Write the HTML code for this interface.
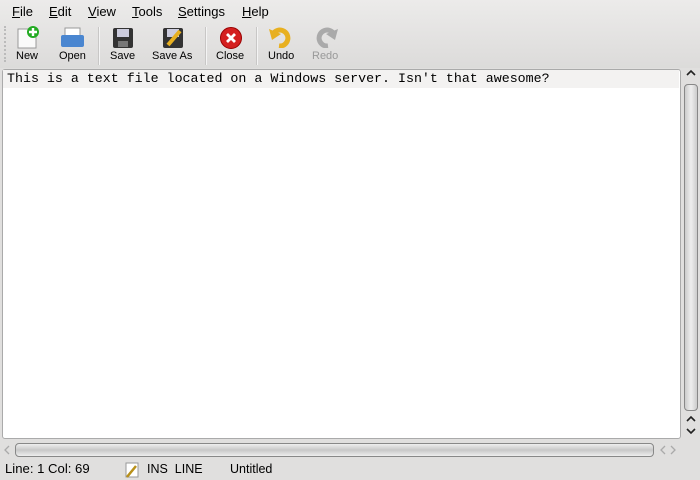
<!DOCTYPE html><html><head><style>
body{margin:0;width:700px;height:480px;background:#e0dfde;font-family:"Liberation Sans",sans-serif;font-size:12px;color:#000;position:relative;overflow:hidden}
.a{position:absolute}
.menu span{position:absolute;top:4px;font-size:13px}
.tb{position:absolute;top:50px;font-size:11px;text-align:center}
.sep{position:absolute;top:27px;width:1px;height:38px;background:#c8c7c6;border-right:1px solid #f4f4f4}
</style></head><body>
<div class="a" style="left:0;top:0;width:700px;height:68px;background:linear-gradient(#ecebea,#dcdbda)"></div>
<div class="menu"><span style="left:12px"><u>F</u>ile</span><span style="left:49px"><u>E</u>dit</span><span style="left:88px"><u>V</u>iew</span><span style="left:132px"><u>T</u>ools</span><span style="left:178px"><u>S</u>ettings</span><span style="left:242px"><u>H</u>elp</span></div>
<div class="a" style="left:4px;top:26px;width:2px;height:36px;border-left:2px dotted #bbb"></div>
<svg class="a" style="left:14px;top:25px" width="28" height="26"><path d="M4 4h12l6 6v13H4z" fill="#fafafa" stroke="#999"/><circle cx="19" cy="7" r="6" fill="#2a2"/><path d="M19 3v8M15 7h8" stroke="#fff" stroke-width="2.4"/></svg>
<svg class="a" style="left:60px;top:27px" width="26" height="22"><rect x="5" y="1" width="15" height="8" fill="#fff" stroke="#999"/><rect x="1" y="8" width="23" height="12" rx="2" fill="#4a86d0"/></svg>
<svg class="a" style="left:112px;top:27px" width="22" height="22"><rect x="1" y="1" width="20" height="20" rx="2" fill="#333"/><rect x="5" y="2" width="12" height="8" fill="#ccd"/><rect x="6" y="14" width="10" height="6" fill="#777"/></svg>
<svg class="a" style="left:162px;top:27px" width="22" height="22"><rect x="1" y="1" width="20" height="20" rx="2" fill="#333"/><rect x="5" y="2" width="12" height="8" fill="#ccd"/><path d="M6 18L18 4" stroke="#e8b020" stroke-width="4"/></svg>
<svg class="a" style="left:219px;top:26px" width="24" height="24"><circle cx="12" cy="12" r="10.5" fill="#d42020" stroke="#900"/><path d="M8 8l8 8M16 8l-8 8" stroke="#fff" stroke-width="2.8"/></svg>
<svg class="a" style="left:268px;top:26px" width="26" height="22"><path d="M5 8a8 8 0 1 1 6 12" fill="none" stroke="#e8b020" stroke-width="5"/><path d="M1 3l3 11 9-6z" fill="#e8b020"/></svg>
<svg class="a" style="left:313px;top:26px" width="26" height="22"><path d="M21 8a8 8 0 1 0-6 12" fill="none" stroke="#aaa" stroke-width="5"/><path d="M25 3l-3 11-9-6z" fill="#aaa"/></svg>
<div class="sep" style="left:98px"></div><div class="sep" style="left:205px"></div><div class="sep" style="left:256px"></div>
<div class="tb" style="left:16px">New</div><div class="tb" style="left:59px">Open</div><div class="tb" style="left:110px">Save</div><div class="tb" style="left:152px">Save As</div><div class="tb" style="left:216px">Close</div><div class="tb" style="left:268px">Undo</div><div class="tb" style="left:312px;color:#999">Redo</div>
<div class="a" style="left:2px;top:69px;width:677px;height:368px;background:#fff;border:1px solid #aaa;border-radius:3px"></div>
<div class="a" style="left:3px;top:70px;width:676px;height:18px;background:#f3f2f1"></div>
<div class="a" style="left:7px;top:71px;font-family:'Liberation Mono',monospace;font-size:13.3px;white-space:pre">This is a text file located on a Windows server. Isn't that awesome?</div>
<div class="a" style="left:684px;top:84px;width:12px;height:325px;border:1px solid #888;border-radius:4px;background:linear-gradient(90deg,#ccc,#eee,#ccc)"></div>
<svg class="a" style="left:684px;top:68px" width="14" height="10"><path d="M3 7l4-4 4 4" fill="none" stroke="#222" stroke-width="1.6"/></svg>
<svg class="a" style="left:684px;top:414px" width="14" height="10"><path d="M3 7l4-4 4 4" fill="none" stroke="#222" stroke-width="1.6"/></svg>
<svg class="a" style="left:684px;top:426px" width="14" height="10"><path d="M3 3l4 4 4-4" fill="none" stroke="#222" stroke-width="1.6"/></svg>
<svg class="a" style="left:2px;top:443px" width="10" height="14"><path d="M7 3l-4 4 4 4" fill="none" stroke="#aaa" stroke-width="1.3"/></svg>
<div class="a" style="left:15px;top:443px;width:637px;height:12px;border:1px solid #888;border-radius:4px;background:linear-gradient(#eee,#c8c8c8,#eee)"></div>
<svg class="a" style="left:656px;top:443px" width="26" height="14"><path d="M9 3l-4 4 4 4M15 3l4 4-4 4" fill="none" stroke="#aaa" stroke-width="1.3"/></svg>
<div class="a" style="left:5px;top:462px;font-size:12.5px;transform:scaleX(1.05);transform-origin:left">Line: 1 Col: 69</div>
<svg class="a" style="left:124px;top:462px" width="16" height="16"><rect x="2" y="1" width="12" height="14" fill="#fff" stroke="#999"/><path d="M3 15L12 4" stroke="#b8901a" stroke-width="2.5"/></svg>
<div class="a" style="left:147px;top:462px;font-size:12.5px">INS&nbsp;&nbsp;LINE</div>
<div class="a" style="left:230px;top:462px;font-size:12.5px">Untitled</div>
</body></html>
